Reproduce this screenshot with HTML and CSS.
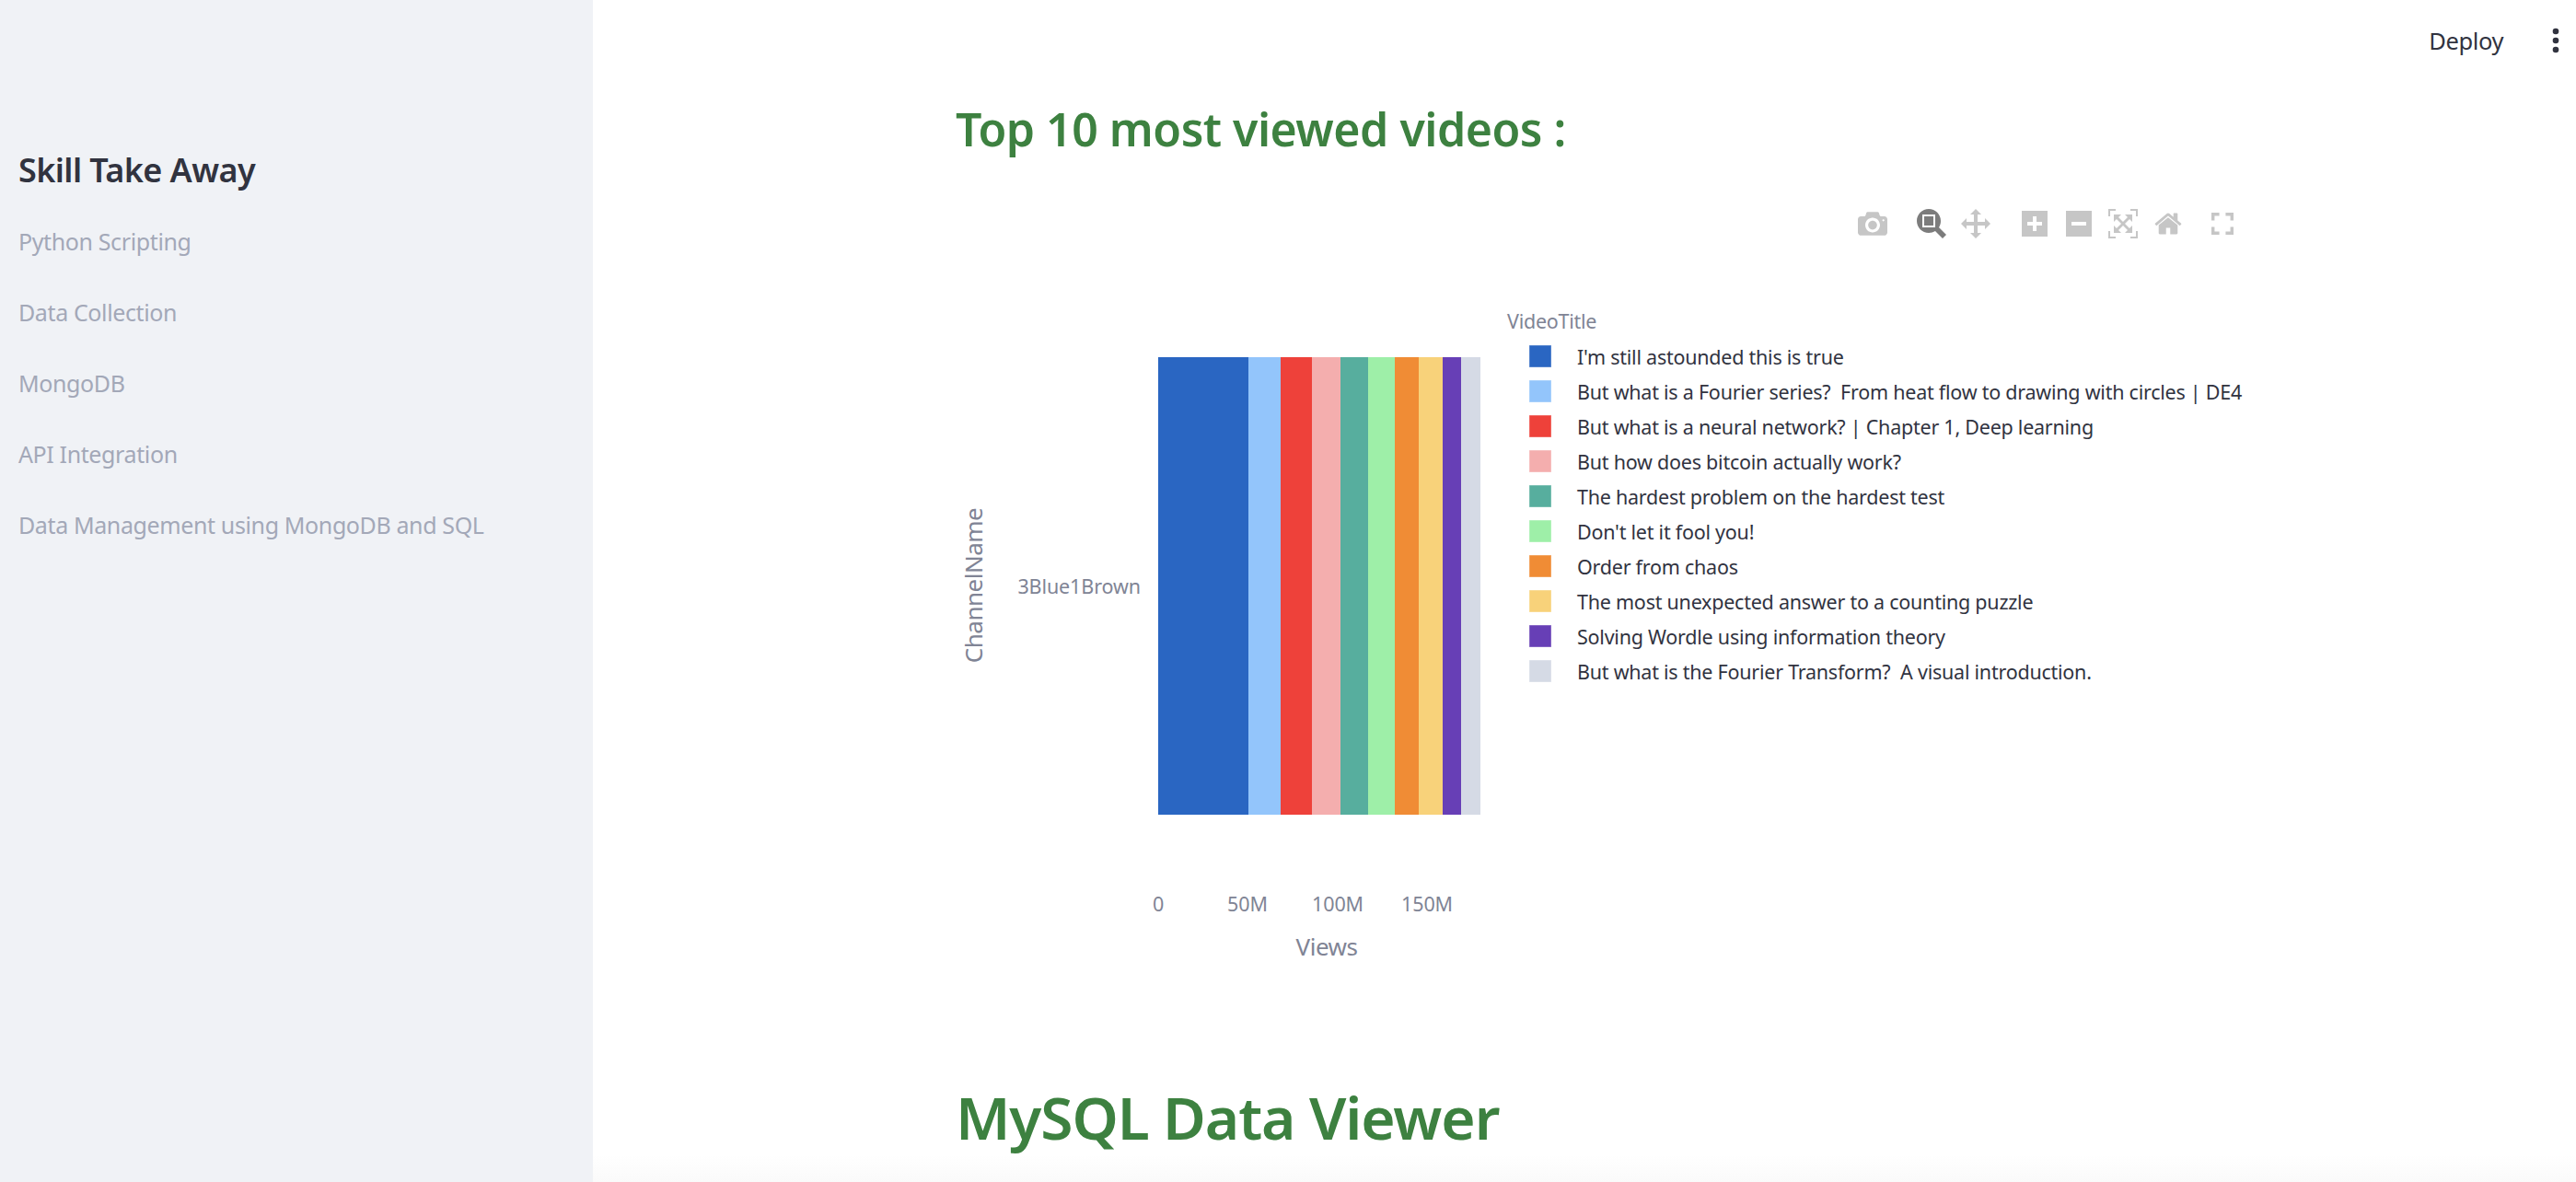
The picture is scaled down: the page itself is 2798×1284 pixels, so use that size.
FILE: index.html
```html
<!DOCTYPE html>
<html>
<head>
    <meta charset="utf-8">
    <title>Skill Take Away</title>
    <link rel="stylesheet" href="styles.css">
</head>
<body>
<aside class="sidebar">
    <h3 class="sidebar-title">Skill Take Away</h3>
    <ul class="sidebar-list">
        <li>Python Scripting</li>
        <li>Data Collection</li>
        <li>MongoDB</li>
        <li>API Integration</li>
        <li>Data Management using MongoDB and SQL</li>
    </ul>
</aside>
<main class="main">
    <header class="topbar">
        <span class="deploy">Deploy</span>
        <svg class="kebab" viewBox="0 0 8 28" width="8" height="28">
            <circle cx="4" cy="4" r="3.3"/>
            <circle cx="4" cy="14" r="3.3"/>
            <circle cx="4" cy="24" r="3.3"/>
        </svg>
    </header>
    <section class="content">
        <h2 class="heading-small">Top 10 most viewed videos :</h2>
        <div class="chart">
            <div class="modebar">
                <svg class="icon icon-camera" viewBox="0 0 1000 1000"><path transform="matrix(1 0 0 -1 0 850)" d="m500 450c-83 0-150-67-150-150 0-83 67-150 150-150 83 0 150 67 150 150 0 83-67 150-150 150z m400 150h-120c-16 0-34 13-39 29l-31 93c-6 15-23 28-40 28h-340c-16 0-34-13-39-28l-31-94c-6-15-23-28-40-28h-120c-55 0-100-45-100-100v-450c0-55 45-100 100-100h800c55 0 100 45 100 100v450c0 55-45 100-100 100z m-400-550c-138 0-250 112-250 250 0 138 112 250 250 250 138 0 250-112 250-250 0-138-112-250-250-250z m365 380c-19 0-35 16-35 35 0 19 16 35 35 35 19 0 35-16 35-35 0-19-16-35-35-35z"/></svg>
                <svg class="icon icon-zoom active" viewBox="0 0 1000 1000"><path transform="matrix(1 0 0 -1 0 850)" d="m1000-25l-250 251c40 63 63 138 63 218 0 224-182 406-407 406-224 0-406-182-406-406s183-406 407-406c80 0 155 22 218 62l250-250 125 125z m-812 250l0 438 437 0 0-438-437 0z m62 375l313 0 0-312-313 0 0 312z"/></svg>
                <svg class="icon icon-pan" viewBox="0 0 1000 1000"><path transform="matrix(1 0 0 -1 0 850)" d="m1000 350l-187 188 0-125-250 0 0 250 125 0-188 187-187-187 125 0 0-250-250 0 0 125-188-188 186-187 0 125 252 0 0-250-125 0 187-188 188 188-125 0 0 250 250 0 0-126 187 188z"/></svg>
                <svg class="icon icon-plus" viewBox="0 0 875 1000"><path transform="matrix(1 0 0 -1 0 850)" d="m1 787l0-875 875 0 0 875-875 0z m687-500l-187 0 0-187-125 0 0 187-188 0 0 125 188 0 0 187 125 0 0-187 187 0 0-125z"/></svg>
                <svg class="icon icon-minus" viewBox="0 0 875 1000"><path transform="matrix(1 0 0 -1 0 850)" d="m0 788l0-876 875 0 0 876-875 0z m688-500l-500 0 0 125 500 0 0-125z"/></svg>
                <svg class="icon icon-auto" viewBox="0 0 1000 1000"><path transform="matrix(1 0 0 -1 0 850)" d="m250 850l-187 0-63 0 0-62 0-188 63 0 0 188 187 0 0 62z m688 0l-188 0 0-62 188 0 0-188 62 0 0 188 0 62-62 0z m-875-938l0 188-63 0 0-188 0-62 63 0 187 0 0 62-187 0z m875 188l0-188-188 0 0-62 188 0 62 0 0 62 0 188-62 0z m-125 188l-1 0-93-94-156 156 156 156 92-93 2 0 0 250-250 0 0-2 93-92-156-156-156 156 94 92 0 2-250 0 0-250 0 0 93 93 157-156-157-156-93 94 0 0 0-250 250 0 0 0-94 93 156 157 156-157-93-93 0 0 250 0 0 250z"/></svg>
                <svg class="icon icon-home" viewBox="0 0 928.6 1000"><path transform="matrix(1 0 0 -1 0 850)" d="m786 296v-267q0-15-11-26t-25-10h-214v214h-143v-214h-214q-15 0-25 10t-11 26v267q0 1 0 2t0 2l321 264 321-264q1-1 1-4z m124 39l-34-41q-5-5-12-6h-2q-7 0-12 3l-386 322-386-322q-7-4-13-4-7 2-12 7l-35 41q-4 5-3 13t6 12l401 334q18 15 42 15t43-15l136-114v109q0 8 5 13t13 5h107q8 0 13-5t5-13v-227l122-102q5-5 6-12t-4-13z"/></svg>
                <svg class="icon-full" viewBox="5 5 14 14"><path d="M7 14H5v5h5v-2H7v-3zm-2-4h2V7h3V5H5v5zm12 7h-3v2h5v-5h-2v3zM14 5v2h3v3h2V5h-5z"/></svg>
            </div>
            <svg class="plot" width="1420" height="860" viewBox="1038 200 1420 860">
                <g>
                    <rect x="1258" y="388" width="98" height="497" fill="#2a66c2"/>
                    <rect x="1356" y="388" width="35" height="497" fill="#93c5fb"/>
                    <rect x="1391" y="388" width="34" height="497" fill="#ee413a"/>
                    <rect x="1425" y="388" width="31" height="497" fill="#f4aeae"/>
                    <rect x="1456" y="388" width="30" height="497" fill="#57ae9e"/>
                    <rect x="1486" y="388" width="29" height="497" fill="#9eefa8"/>
                    <rect x="1515" y="388" width="26" height="497" fill="#f08c35"/>
                    <rect x="1541" y="388" width="26" height="497" fill="#f8d27a"/>
                    <rect x="1567" y="388" width="20" height="497" fill="#673fb6"/>
                    <rect x="1587" y="388" width="21" height="497" fill="#d5dae5"/>
                </g>
                <text class="tick" x="1239" y="645" text-anchor="end">3Blue1Brown</text>
                <text class="axis-title" transform="translate(1067 636) rotate(-90)" text-anchor="middle">ChannelName</text>
                <text class="tick" x="1258" y="990" text-anchor="middle">0</text>
                <text class="tick" x="1355" y="990" text-anchor="middle">50M</text>
                <text class="tick" x="1453" y="990" text-anchor="middle">100M</text>
                <text class="tick" x="1550" y="990" text-anchor="middle">150M</text>
                <text class="axis-title" x="1441" y="1038" text-anchor="middle">Views</text>

                <text class="legend-title" x="1637" y="357">VideoTitle</text>
                <g>
                    <rect class="swatch" x="1661" y="375" width="24" height="24" fill="#2a66c2"/>
                    <rect class="swatch" x="1661" y="413" width="24" height="24" fill="#93c5fb"/>
                    <rect class="swatch" x="1661" y="451" width="24" height="24" fill="#ee413a"/>
                    <rect class="swatch" x="1661" y="489" width="24" height="24" fill="#f4aeae"/>
                    <rect class="swatch" x="1661" y="527" width="24" height="24" fill="#57ae9e"/>
                    <rect class="swatch" x="1661" y="565" width="24" height="24" fill="#9eefa8"/>
                    <rect class="swatch" x="1661" y="603" width="24" height="24" fill="#f08c35"/>
                    <rect class="swatch" x="1661" y="641" width="24" height="24" fill="#f8d27a"/>
                    <rect class="swatch" x="1661" y="679" width="24" height="24" fill="#673fb6"/>
                    <rect class="swatch" x="1661" y="717" width="24" height="24" fill="#d5dae5"/>
                </g>
                <g class="legend-text">
                    <text x="1713" y="396">I'm still astounded this is true</text>
                    <text x="1713" y="434">But what is a Fourier series?  From heat flow to drawing with circles | DE4</text>
                    <text x="1713" y="472">But what is a neural network? | Chapter 1, Deep learning</text>
                    <text x="1713" y="510">But how does bitcoin actually work?</text>
                    <text x="1713" y="548">The hardest problem on the hardest test</text>
                    <text x="1713" y="586">Don't let it fool you!</text>
                    <text x="1713" y="624">Order from chaos</text>
                    <text x="1713" y="662">The most unexpected answer to a counting puzzle</text>
                    <text x="1713" y="700">Solving Wordle using information theory</text>
                    <text x="1713" y="738">But what is the Fourier Transform?  A visual introduction.</text>
                </g>
            </svg>
        </div>
        <h1 class="heading-large">MySQL Data Viewer</h1>
    </section>
    <div class="bottom-fade"></div>
</main>
</body>
</html>
```

FILE: styles.css
```css
* {
    box-sizing: border-box;
}
html, body {
    margin: 0;
    height: 100%;
    overflow: hidden;
}
body {
    display: flex;
    font-family: "Noto Sans", sans-serif;
    color: #31333f;
    background: #ffffff;
}
.sidebar {
    width: 644px;
    flex-shrink: 0;
    height: 100%;
    background: #f0f2f6;
    padding: 160px 20px 0 20px;
}
.sidebar-title {
    margin: 0 0 32px 0;
    font-size: 36px;
    line-height: 50px;
    font-weight: 600;
    letter-spacing: -0.6px;
}
.sidebar-list {
    list-style: none;
    margin: 0;
    padding: 0;
    display: flex;
    flex-direction: column;
    gap: 37px;
    font-size: 25px;
    line-height: 40px;
    letter-spacing: -0.38px;
    color: #a3a8b8;
}
.main {
    position: relative;
    flex: 1;
    min-width: 0;
}
.topbar {
    display: flex;
    justify-content: flex-end;
    align-items: center;
    gap: 53px;
    height: 88px;
    padding-right: 18px;
}
.deploy {
    font-size: 25.5px;
    letter-spacing: -0.4px;
}
.kebab {
    fill: #31333f;
}
.content {
    padding-left: 394px;
}
.heading-small {
    margin: 0;
    height: 112px;
    font-size: 50px;
    line-height: 104px;
    font-weight: 600;
    letter-spacing: -0.5px;
    color: #3d8140;
}
.heading-large {
    margin: 0;
    font-size: 64px;
    line-height: 90px;
    font-weight: 600;
    letter-spacing: -1.1px;
    color: #3d8140;
}
.chart {
    position: relative;
    height: 860px;
    margin-bottom: 109px;
}
.plot {
    display: block;
}
.modebar {
    position: absolute;
    top: 27px;
    left: 980px;
    display: flex;
    align-items: center;
    fill: #c6c6c6;
}
.icon {
    height: 32px;
    display: block;
}
.icon-camera {
    width: 32px;
    margin-right: 32px;
}
.icon-zoom {
    width: 32px;
    margin-right: 16px;
    fill: #7c7c7c;
}
.icon-pan {
    width: 32px;
    margin-right: 34px;
}
.icon-plus {
    width: 28px;
    margin-right: 20px;
}
.icon-minus {
    width: 28px;
    margin-right: 18px;
}
.icon-auto {
    width: 32px;
    margin-right: 18px;
}
.icon-home {
    width: 30px;
    margin-right: 32px;
}
.icon-full {
    width: 24px;
    height: 24px;
    display: block;
}
.plot text {
    font-family: "Noto Sans", sans-serif;
    white-space: pre;
}
.tick {
    font-size: 21.5px;
    letter-spacing: -0.1px;
    fill: #808495;
}
.axis-title {
    font-size: 26px;
    letter-spacing: -0.5px;
    fill: #808495;
}
.legend-title {
    font-size: 21.5px;
    letter-spacing: -0.25px;
    fill: #808495;
}
.legend-text {
    font-size: 21.5px;
    letter-spacing: -0.24px;
    fill: #31333f;
}
.swatch {
    stroke: #ffffff;
    stroke-opacity: 0.4;
}
.bottom-fade {
    position: absolute;
    left: 0;
    right: 0;
    bottom: 0;
    height: 30px;
    background: linear-gradient(to bottom, rgba(250, 250, 250, 0), #fafafa);
}
```
